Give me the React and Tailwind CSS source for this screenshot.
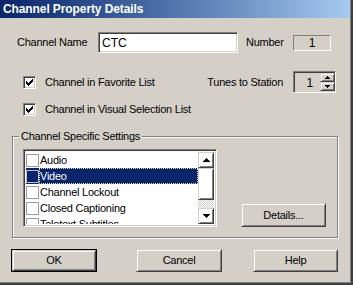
import React from 'react'

const raised =
    'border border-t-[#d4d0c8] border-l-[#d4d0c8] border-b-[#404040] border-r-[#404040] shadow-[inset_1px_1px_0_#fff,inset_-1px_-1px_0_#808080]'
const sunken =
    'border border-t-[#808080] border-l-[#808080] border-b-white border-r-white shadow-[inset_1px_1px_0_#404040,inset_-1px_-1px_0_#d4d0c8]'

const checkPixels = [
    [6, 0], [5, 1], [6, 1], [0, 2], [4, 2], [5, 2], [6, 2],
    [0, 3], [1, 3], [3, 3], [4, 3], [5, 3], [0, 4], [1, 4], [2, 4], [3, 4], [4, 4],
    [1, 5], [2, 5], [3, 5], [2, 6],
]

function CheckBox() {
    return (
        <div className={`w-[13px] h-[13px] bg-white ${sunken} flex items-center justify-center shrink-0`}>
            <svg width="7" height="7" viewBox="0 0 7 7" shapeRendering="crispEdges">
                {checkPixels.map(([x, y]) => (
                    <rect key={`${x}-${y}`} x={x} y={y} width="1" height="1" fill="#000" />
                ))}
            </svg>
        </div>
    )
}

function Arrow({ down }) {
    return (
        <svg width="7" height="4" viewBox="0 0 7 4" shapeRendering="crispEdges">
            <polygon points={down ? '0,0 7,0 3.5,4' : '3.5,0 7,4 0,4'} fill="#000" />
        </svg>
    )
}

function SmallArrow({ down }) {
    return (
        <svg width="5" height="3" viewBox="0 0 5 3" shapeRendering="crispEdges">
            <polygon points={down ? '0,0 5,0 2.5,3' : '2.5,0 5,3 0,3'} fill="#000" />
        </svg>
    )
}

function Button({ children, className = '', isDefault }) {
    const inner = (
        <div className={`w-full h-full ${raised} flex items-center justify-center`}>{children}</div>
    )
    if (isDefault) {
        return <div className={`border border-black ${className}`}>{inner}</div>
    }
    return <div className={className}>{inner}</div>
}

const items = ['Audio', 'Video', 'Channel Lockout', 'Closed Captioning', 'Teletext Subtitles']

function App() {
    return (
        <div className="w-[353px] h-[285px] bg-[#d4d0c8] border-r-2 border-b-2 border-[#404040] shadow-[inset_-1px_-1px_0_#808080] font-['Liberation_Sans',Arial,sans-serif] text-[11px] tracking-[-0.25px] text-black overflow-hidden">
            <div className="h-[18px] w-[350px] bg-gradient-to-r from-[#0a246a] to-[#a6caf0] flex items-center pl-[3px] text-white font-bold text-[12px] tracking-[-0.1px]">
                Channel Property Details
            </div>

            <div className="flex items-center mt-[14px] h-[21px]">
                <span className="ml-[17px] w-[81px]">Channel Name</span>
                <div className={`w-[140px] h-[21px] bg-white ${sunken} flex items-center pl-[3px] text-[12px] tracking-normal`}>
                    CTC
                </div>
                <span className="ml-[8px] w-[47px]">Number</span>
                <div className="w-[38px] h-[16px] border border-t-[#808080] border-l-[#808080] border-b-white border-r-white flex items-center justify-center text-[12px]">
                    1
                </div>
            </div>

            <div className="flex items-center mt-[18px] h-[22px]">
                <div className="ml-[23px]">
                    <CheckBox />
                </div>
                <span className="ml-[9px]">Channel in Favorite List</span>
                <span className="ml-auto mr-[10px]">Tunes to Station</span>
                <div className={`w-[43px] h-[22px] mr-[15px] ${sunken} flex`}>
                    <div className="flex-1 flex items-center justify-end pr-[7px] pt-[1px] text-[12px]">1</div>
                    <div className="flex flex-col w-[15px] mt-[1px]">
                        <div className={`h-[9px] ${raised} flex items-center justify-center`}>
                            <SmallArrow />
                        </div>
                        <div className={`h-[9px] ${raised} flex items-center justify-center`}>
                            <SmallArrow down />
                        </div>
                    </div>
                </div>
            </div>

            <div className="flex items-center mt-[5px] h-[22px]">
                <div className="ml-[23px]">
                    <CheckBox />
                </div>
                <span className="ml-[9px]">Channel in Visual Selection List</span>
            </div>

            <div className="relative ml-[12px] mt-[16px] w-[326px] h-[102px] border border-[#808080] shadow-[1px_1px_0_#fff,inset_1px_1px_0_#fff]">
                <span className="absolute left-[6px] top-[-8px] bg-[#d4d0c8] px-[2px] leading-[14px]">
                    Channel Specific Settings
                </span>
                <div className="flex items-end pl-[10px] pt-[12px]">
                    <div className={`w-[194px] h-[78px] bg-white ${sunken} p-[2px] flex overflow-hidden`}>
                        <div className="flex-1 flex flex-col overflow-hidden">
                            {items.map((item) => {
                                const selected = item === 'Video'
                                return (
                                    <div
                                        key={item}
                                        className={`h-[16px] shrink-0 flex items-center ${selected ? 'bg-[#0a246a] text-white' : ''}`}
                                    >
                                        <div className={`w-[13px] h-[13px] shrink-0 border ${selected ? 'border-[#c0c0c0]' : 'border-[#9a9a9a]'}`} />
                                        <span
                                            className={`flex-1 h-full flex items-center pl-[1px] ${selected ? 'outline outline-1 outline-dotted outline-[#e8e0a8] -outline-offset-1' : ''}`}
                                        >
                                            {item}
                                        </span>
                                    </div>
                                )
                            })}
                        </div>
                        <div className="w-[16px] flex flex-col shrink-0">
                            <div className={`h-[16px] ${raised} flex items-center justify-center`}>
                                <Arrow />
                            </div>
                            <div className={`h-[33px] ${raised}`} />
                            <div className="h-[9px] bg-[image:repeating-conic-gradient(#ffffff_0%_25%,#d4d0c8_0%_50%)] bg-[length:2px_2px]" />
                            <div className={`h-[16px] ${raised} flex items-center justify-center`}>
                                <Arrow down />
                            </div>
                        </div>
                    </div>
                    <Button className="ml-[24px] w-[85px] h-[24px]">Details...</Button>
                </div>
            </div>

            <div className="flex mt-[11px]">
                <Button isDefault className="ml-[11px] w-[86px] h-[23px]">OK</Button>
                <Button className="ml-[39px] w-[86px] h-[23px]">Cancel</Button>
                <Button className="ml-[31px] w-[85px] h-[23px]">Help</Button>
            </div>
        </div>
    )
}

export default App
